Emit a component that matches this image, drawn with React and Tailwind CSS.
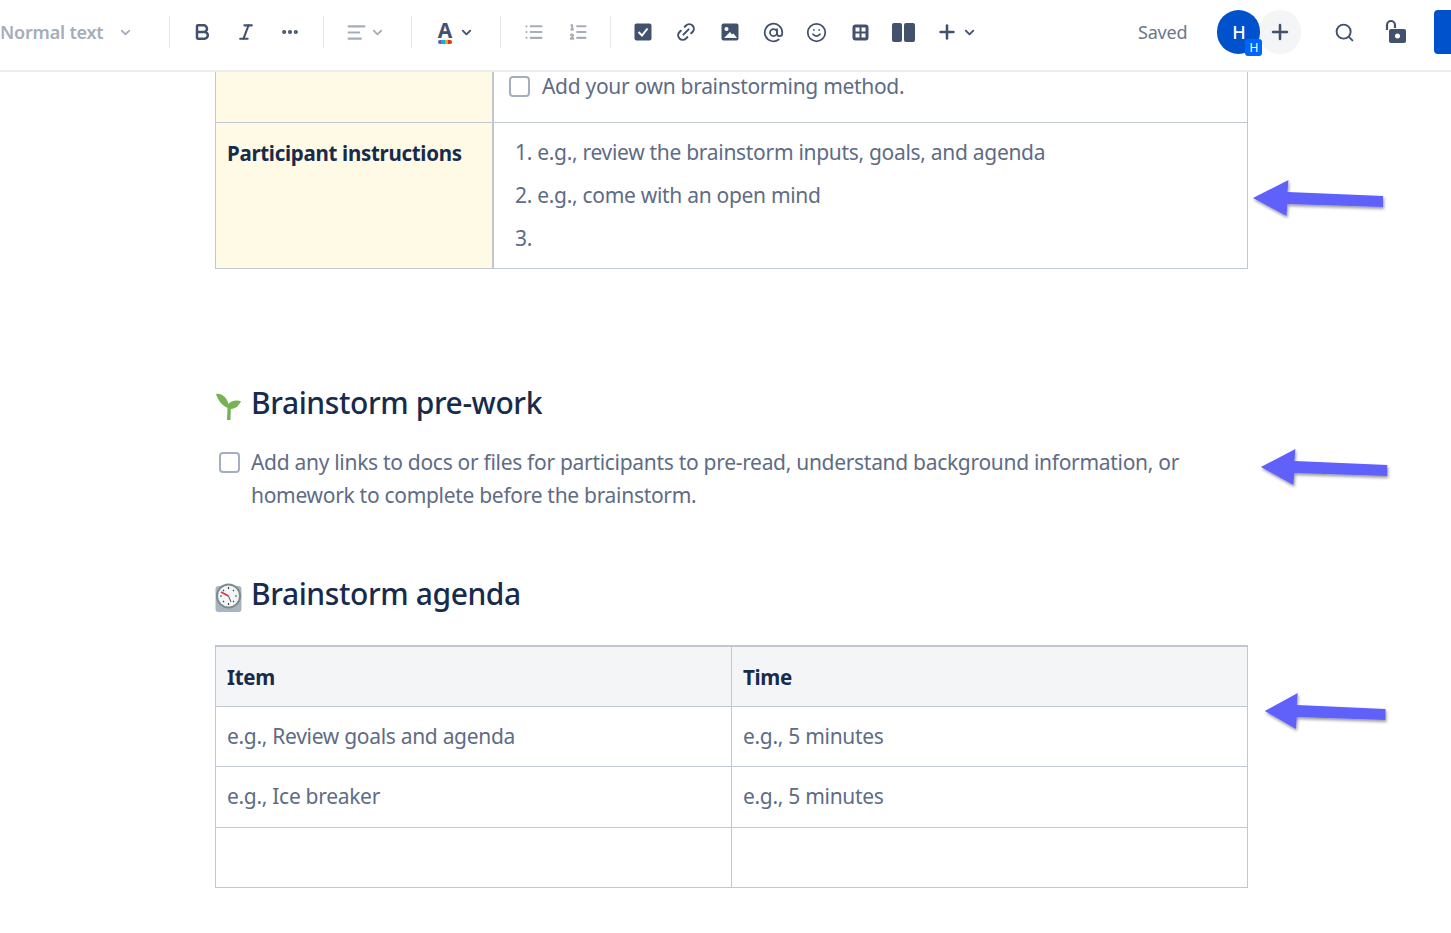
import React from 'react';
import { Bold, Italic, MoreHorizontal, ChevronDown, AlignLeft, List, ListOrdered, Link2, AtSign, Smile, Plus, Search } from 'lucide-react';

const Sep = () => <div className="w-px h-8 bg-[#e4e6ea] shrink-0" />;

const Chev = ({ color = 'text-[#a5adba]' }) => <ChevronDown className={`w-[15px] h-[15px] ${color}`} strokeWidth={3} />;

const Slot = ({ children }) => <div className="w-[43.5px] flex items-center justify-center shrink-0">{children}</div>;

const Arrow = ({ className, width }) => (
  <svg className={`absolute ${className}`} style={{ width }} height="46" viewBox="0 0 140 46" preserveAspectRatio="none">
    <defs>
      <filter id="arrowShadow" x="-10%" y="-20%" width="120%" height="150%">
        <feDropShadow dx="1" dy="2" stdDeviation="1.5" floodColor="#000" floodOpacity="0.4" />
      </filter>
    </defs>
    <path d="M2 20 L38 2 L37 14 L134 18 L134 29 L37 26 L36 38 Z" fill="#6060fb" filter="url(#arrowShadow)" />
  </svg>
);

const Checkbox = ({ className = '' }) => (
  <span className={`block w-[21px] h-[21px] rounded-[4px] border-2 border-[#a5adc0] bg-white shrink-0 ${className}`} />
);

const Sprout = () => (
  <svg width="28" height="30" viewBox="0 0 28 30" className="shrink-0 mt-[8px]">
    <path d="M1 3 C6 2 12 6 13.500 13 C16 10 20 8.500 26 10 C24 15 20 18 15.800 18 L15.500 29 L12 29 L12.500 17 C8 15 3 10 1 3 Z" fill="#77b255" />
  </svg>
);

const Clock = () => (
  <svg width="28" height="30" viewBox="0 0 28 30" className="shrink-0 mt-[8px]">
    <rect x="0.500" y="4" width="26" height="26" rx="3" fill="#a9b5bd" />
    <circle cx="13.500" cy="14" r="12.500" fill="#7c8a92" />
    <circle cx="13.500" cy="14" r="10.500" fill="#f2f4f5" />
    <path d="M13.500 14 L6 10" stroke="#dd2e44" strokeWidth="1.500" />
    <path d="M13.500 14 L16 20" stroke="#555" strokeWidth="1" />
    <path d="M13.500 5 v2 M13.500 21 v2 M5 14 h2 M20 14 h2 M8 8 l1 1 M19 8 l-1 1 M8 20 l1 -1 M19 20 l-1 -1" stroke="#444" strokeWidth="1.200" />
  </svg>
);

const Toolbar = () => (
  <header className="h-[72px] shrink-0 bg-white border-b-2 border-[#ebecf0] flex items-center pb-[6px] relative z-10 overflow-hidden">
    <span className="w-[104px] shrink-0 text-[18px] leading-6 text-[#a5adba] font-semibold tracking-[-0.2px] whitespace-nowrap">Normal text</span>
    <span className="ml-[14px] w-[51px] shrink-0"><Chev /></span>
    <Sep />
    <div className="w-[153px] shrink-0 flex items-center text-[#42526e]">
      <Bold className="ml-[22px] w-5 h-5" strokeWidth={3} />
      <Italic className="ml-[24px] w-5 h-5" strokeWidth={2.5} />
      <MoreHorizontal className="ml-[24px] w-[20px] h-[20px]" strokeWidth={3} />
    </div>
    <Sep />
    <div className="w-[87px] shrink-0 flex items-center text-[#a5adba]">
      <AlignLeft className="ml-[22px] w-[21px] h-[21px]" strokeWidth={2.5} />
      <span className="ml-[3px]"><Chev /></span>
    </div>
    <Sep />
    <div className="w-[88px] shrink-0 flex items-center text-[#42526e]">
      <div className="ml-[23px] w-[20px] flex flex-col items-center">
        <span className="text-[21px] leading-[18px] font-bold text-[#42526e]">A</span>
        <span className="w-[14px] h-[4px] rounded-full mt-[1px] bg-[linear-gradient(90deg,#6554c0_0_25%,#00b8d9_25%_50%,#ff991f_50%_75%,#de350b_75%)]" />
      </div>
      <span className="ml-[4px]"><Chev color="text-[#42526e]" /></span>
    </div>
    <Sep />
    <div className="w-[109px] shrink-0 flex items-center text-[#a5adba]">
      <List className="ml-[23px] w-5 h-5" strokeWidth={2.500} />
      <ListOrdered className="ml-[24px] w-5 h-5" strokeWidth={2.500} />
    </div>
    <Sep />
    <div className="ml-[10px] flex items-center text-[#42526e] shrink-0">
      <Slot>
        <svg width="18" height="18" viewBox="0 0 18 18">
          <rect width="17" height="17" x="0.500" y="0.500" rx="2" fill="#42526e" />
          <path d="M4.500 9 L8 12.500 L13.500 5.500" stroke="#fff" strokeWidth="2" fill="none" />
        </svg>
      </Slot>
      <Slot><Link2 className="w-[22px] h-[22px] -rotate-45" strokeWidth={2.200} /></Slot>
      <Slot>
        <svg width="18" height="18" viewBox="0 0 18 18">
          <rect x="0.500" y="0.500" width="17" height="17" rx="2" fill="#42526e" />
          <circle cx="5.500" cy="6" r="2" fill="#fff" />
          <path d="M3 15 L9 9 L11 11.500 L12.500 10.500 L16 15 Z" fill="#fff" />
        </svg>
      </Slot>
      <Slot><AtSign className="w-[21px] h-[21px]" strokeWidth={2} /></Slot>
      <Slot><Smile className="w-[21px] h-[21px]" strokeWidth={2} /></Slot>
      <Slot>
        <svg width="17" height="17" viewBox="0 0 17 17">
          <rect x="0.500" y="0.500" width="16" height="16" rx="3" fill="#42526e" />
          <rect x="3.500" y="3.500" width="4" height="4" fill="#fff" />
          <rect x="9.500" y="3.500" width="4" height="4" fill="#fff" />
          <rect x="3.500" y="9.500" width="4" height="4" fill="#fff" />
          <rect x="9.500" y="9.500" width="4" height="4" fill="#fff" />
        </svg>
      </Slot>
      <Slot>
        <div className="flex gap-[2px]">
          <span className="w-[10px] h-[19px] rounded-[2px] bg-[#42526e]" />
          <span className="w-[11px] h-[19px] rounded-[2px] bg-[#42526e]" />
        </div>
      </Slot>
      <Slot><Plus className="w-[22px] h-[22px]" strokeWidth={2.800} /></Slot>
      <span className="-ml-[7px]"><Chev color="text-[#42526e]" /></span>
    </div>
    <span className="ml-[161px] shrink-0 text-[18px] leading-6 text-[#6b778c] tracking-[-0.2px]">Saved</span>
    <div className="ml-[30px] shrink-0 w-[43px] h-[44px] rounded-full bg-[#0052cc] flex items-center justify-center text-white font-medium text-[18px] relative z-10">
      H
      <span className="absolute -right-[2px] -bottom-[2px] w-[17px] h-[17px] rounded-[3px] bg-[#0065ff] text-[12px] font-normal flex items-center justify-center">H</span>
    </div>
    <div className="-ml-[1px] shrink-0 w-[42px] h-[44px] rounded-full bg-[#f4f5f7] flex items-center justify-center text-[#42526e]">
      <Plus className="w-[24px] h-[24px]" strokeWidth={2.500} />
    </div>
    <Search className="ml-[33px] shrink-0 w-[21px] h-[21px] text-[#42526e]" strokeWidth={2.200} />
    <svg className="ml-[29px] shrink-0" width="24" height="26" viewBox="0 0 24 26">
      <path d="M3 11 V6 a4 4 0 0 1 8 0 v3" stroke="#42526e" strokeWidth="2.200" fill="none" />
      <rect x="5" y="10" width="17" height="14" rx="2" fill="#42526e" />
      <circle cx="13.500" cy="17" r="2.500" fill="#fff" />
    </svg>
    <div className="ml-[26px] w-[20px] h-[44px] rounded-l-[4px] bg-[#0052cc] shrink-0" />
  </header>
);

const bodyText = 'text-[21px] leading-[33px] tracking-[-0.3px] text-[#5e6c84]';
const labelText = 'text-[20.500px] tracking-[-0.3px] font-bold text-[#172b4d]';
const headingText = 'flex items-start text-[30px] leading-[40px] tracking-[-0.4px] text-[#172b4d] font-medium';

export default function App() {
  return (
    <div className="h-[933px] w-[1451px] overflow-hidden bg-white relative font-['Noto_Sans','Open_Sans',sans-serif] flex flex-col">
      <Toolbar />

      <main className="ml-[215px] w-[1033px] -mt-[2px]">
        {/* top table */}
        <div className="grid grid-cols-[278px_1fr] border-x border-b border-[#c1c7d0]">
          <div className="h-[52px] bg-[#fffae6] border-r-2 border-[#c1c7d0]" />
          <div className="flex items-start pl-[15px]">
            <Checkbox className="mt-[6px]" />
            <span className={`ml-[12px] ${bodyText}`}>Add your own brainstorming method.</span>
          </div>
        </div>
        <div className="grid grid-cols-[278px_1fr] border-x border-b border-[#c1c7d0] h-[146px]">
          <div className={`bg-[#fffae6] border-r-2 border-[#c1c7d0] pl-[11px] pt-[14px] leading-[33px] ${labelText}`}>
            Participant instructions
          </div>
          <ol className={`pl-[21px] pt-[13px] ${bodyText}`}>
            <li className="h-[43px]">1. e.g., review the brainstorm inputs, goals, and agenda</li>
            <li className="h-[43px]">2. e.g., come with an open mind</li>
            <li>3.</li>
          </ol>
        </div>

        <h2 className={`mt-[114px] ${headingText}`}>
          <Sprout />
          <span className="ml-[8px]">Brainstorm pre-work</span>
        </h2>
        <div className="mt-[23px] flex items-start pl-[4px]">
          <Checkbox className="mt-[6px]" />
          <p className={`ml-[11px] w-[960px] ${bodyText}`}>
            Add any links to docs or files for participants to pre-read, understand background information, or homework to complete before the brainstorm.
          </p>
        </div>

        <h2 className={`mt-[62px] ${headingText}`}>
          <Clock />
          <span className="ml-[8px]">Brainstorm agenda</span>
        </h2>

        <table className="mt-[31px] w-full table-fixed border-collapse border border-[#c1c7d0] border-t-2">
          <thead>
            <tr className={`h-[60px] bg-[#f4f5f7] text-left ${labelText}`}>
              <th className="border border-[#c1c7d0] border-t-2 pl-[11px] pt-[2px] font-bold">Item</th>
              <th className="border border-[#c1c7d0] border-t-2 pl-[11px] pt-[2px] font-bold">Time</th>
            </tr>
          </thead>
          <tbody className={bodyText}>
            <tr className="h-[60px]">
              <td className="border border-[#c1c7d0] pl-[11px]">e.g., Review goals and agenda</td>
              <td className="border border-[#c1c7d0] pl-[11px]">e.g., 5 minutes</td>
            </tr>
            <tr className="h-[61px]">
              <td className="border border-[#c1c7d0] pl-[11px]">e.g., Ice breaker</td>
              <td className="border border-[#c1c7d0] pl-[11px]">e.g., 5 minutes</td>
            </tr>
            <tr className="h-[60px]">
              <td className="border border-[#c1c7d0]" />
              <td className="border border-[#c1c7d0]" />
            </tr>
          </tbody>
        </table>
      </main>

      <Arrow className="left-[1251px] top-[178px]" width={138} />
      <Arrow className="left-[1259px] top-[447px]" width={134} />
      <Arrow className="left-[1263px] top-[691px]" width={128} />
    </div>
  );
}
